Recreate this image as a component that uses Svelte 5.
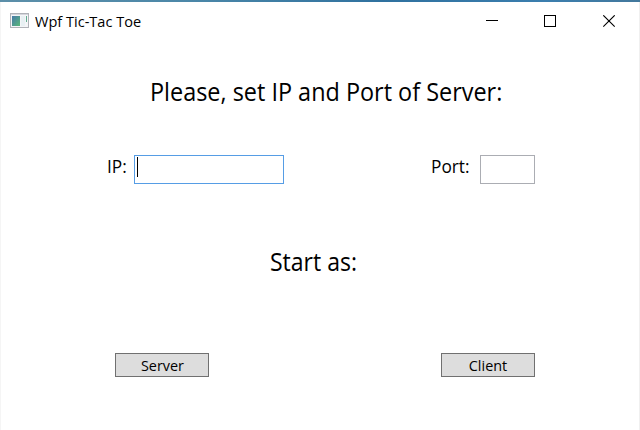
<script>
  let ip = $state('');
  let port = $state('');
</script>

<div class="window">
  <header>
    <svg class="app" width="19" height="15" viewBox="0 0 19 15">
      <defs>
        <linearGradient id="pane" x1="0" y1="0" x2="1" y2="1">
          <stop offset="0" stop-color="#4779a8" />
          <stop offset="1" stop-color="#58b879" />
        </linearGradient>
      </defs>
      <rect x="0.5" y="0.5" width="18" height="14" fill="#f4f5f7" stroke="#b0b2b8" />
      <rect x="1" y="1" width="17" height="1" fill="#d5d7dd" />
      <rect x="2" y="3" width="8" height="10" fill="url(#pane)" />
      <rect x="11" y="3" width="4" height="10" fill="#e8f0f3" />
      <rect x="16" y="3" width="1" height="6" fill="#62ad91" />
    </svg>
    <span class="title"><span>Wpf Tic-Tac Toe</span></span>
    <svg class="controls" width="130" height="13" viewBox="0 0 130 13" stroke="#000" fill="none">
      <path d="M0 5.5H12" />
      <rect x="58.5" y="0.5" width="11" height="11" />
      <path d="M117.3 0.3L128.7 11.7M128.7 0.3L117.3 11.7" stroke-width="1.1" />
    </svg>
  </header>

  <main>
    <h1><span>Please, set IP and Port of Server:</span></h1>
    <div class="fields">
      <label class="ip"><span>IP:</span>
        <span class="box focused"><input bind:value={ip} /><i></i></span>
      </label>
      <label class="port"><span>Port:</span>
        <span class="box"><input bind:value={port} /></span>
      </label>
    </div>
    <h2><span>Start as:</span></h2>
    <div class="actions">
      <button><span>Server</span></button>
      <button><span>Client</span></button>
    </div>
  </main>
</div>

<style>
  :global(body) { margin: 0; }
  .window {
    box-sizing: border-box;
    width: 640px;
    height: 430px;
    overflow: hidden;
    background: #fff;
    border-top: 2px solid #3d7ba6;
    border-image: linear-gradient(90deg, #5c8fa9, #4b87a8 30%, #2f719f 60%, #3b7eae 85%, #43789c) 1;
    border-image-width: 2px 0 0;
    box-shadow: inset 1px 0 #f5f5f5, inset -1px 0 #f0f0f0;
    color: #000;
    font-family: "Open Sans", "Noto Sans", sans-serif;
  }
  header {
    display: flex;
    align-items: flex-start;
    height: 40px;
    padding: 11px 24px 0 10px;
    box-sizing: border-box;
  }
  .title {
    margin-left: 6px;
    font-size: 15px;
    line-height: 17px;
    white-space: nowrap;
  }
  .title span, h1 span, h2 span, label > span:first-child, button span {
    display: inline-block;
    transform-origin: 0 50%;
  }
  .title span { transform: scaleX(0.97); }
  h1 span { transform: scaleX(0.937); }
  h2 span { transform: scaleX(0.92); }
  label > span:first-child { transform: scaleX(0.96); }
  button span { transform: scaleX(0.96); transform-origin: 50% 50%; }
  .controls { margin: 2px 0 0 auto; }
  h1, h2 {
    margin: 0;
    font-size: 25px;
    font-weight: 400;
    line-height: 34px;
    white-space: nowrap;
  }
  h1 { padding: 32px 0 0 150px; height: 34px; }
  h2 { padding: 60px 0 0 270px; height: 34px; }
  .fields {
    display: flex;
    justify-content: space-between;
    padding: 47px 105px 0 107px;
  }
  label {
    display: flex;
    justify-content: space-between;
    font-size: 18px;
    line-height: 22px;
  }
  .ip { width: 177px; }
  .port { width: 104px; }
  .box {
    position: relative;
    box-sizing: border-box;
    width: 150px;
    height: 29px;
    border: 1px solid #abadb3;
  }
  .port .box { width: 55px; }
  .box.focused { border-color: #569de5; }
  .box i {
    position: absolute;
    left: 2px;
    top: 1px;
    width: 1px;
    height: 20px;
    background: #000;
  }
  input {
    display: block;
    box-sizing: border-box;
    width: 100%;
    height: 100%;
    padding: 0 3px;
    border: 0;
    outline: 0;
    background: transparent;
    font: inherit;
  }
  .actions {
    display: flex;
    justify-content: space-between;
    padding: 75px 105px 0 115px;
  }
  button {
    box-sizing: border-box;
    width: 94px;
    height: 24px;
    padding: 0;
    border: 1px solid #707070;
    border-radius: 0;
    background: #ddd;
    color: #000;
    font: 15px/22px "Open Sans", "Noto Sans", sans-serif;
  }
</style>
